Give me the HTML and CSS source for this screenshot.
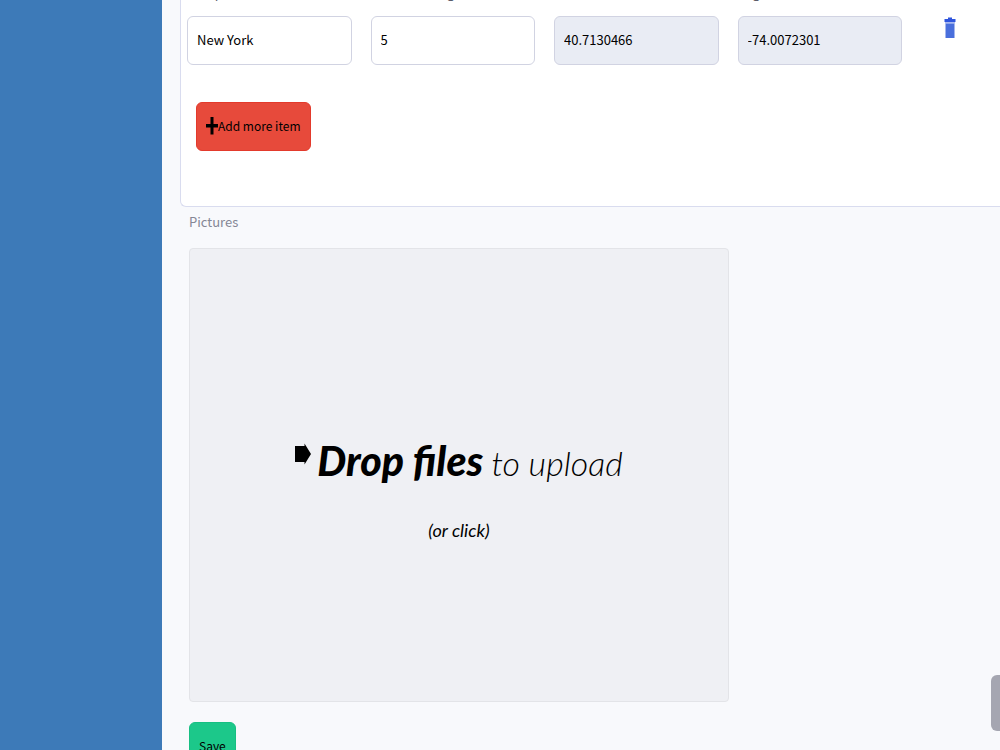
FILE: index.html
```html
<!DOCTYPE html>
<html lang="en">
<head>
    <meta charset="UTF-8">
    <meta name="viewport" content="width=device-width, initial-scale=1.0">
    <title>Edit trip</title>
    <link rel="stylesheet" href="styles.css">
</head>
<body>
    <div class="wrapper">
        <nav class="sidebar"></nav>

        <main class="content">
            <form class="trip-form">
                <div class="card">
                    <div class="item-row">
                        <div class="field">
                            <label for="camp">Camp</label>
                            <input type="text" id="camp" value="New York">
                        </div>
                        <div class="field">
                            <label for="order">Order ranking</label>
                            <input type="text" id="order" value="5">
                        </div>
                        <div class="field">
                            <label for="lat">Lat</label>
                            <input type="text" id="lat" value="40.7130466" readonly>
                        </div>
                        <div class="field">
                            <label for="lng">Lng</label>
                            <input type="text" id="lng" value="-74.0072301" readonly>
                        </div>
                        <button type="button" class="delete-btn" aria-label="Delete">
                            <svg width="12" height="22" viewBox="0 0 12 22">
                                <path fill="#2f55dd" d="M4 0.500h4V2h3.500v3H0.500V2H4z"/>
                                <path fill="#a9b8f0" d="M1 5h10v1.500H1z"/>
                                <path fill="#4a6fdc" d="M1.500 6.500h9V21h-9z"/>
                            </svg>
                        </button>
                    </div>

                    <button type="button" class="btn btn-add">
                        <svg width="12" height="20" viewBox="0 0 12 20">
                            <path d="M4.500 1h3v7H12v3.500H7.500v7h-3v-7H0V8h4.500z"/>
                        </svg>Add more item
                    </button>
                </div>

                <div class="pictures">
                    <label for="files">Pictures</label>
                    <button type="button" class="dropzone" id="files">
                        <span class="drop-title">
                            <svg width="16" height="22" viewBox="0 0 16 22">
                                <path d="M0 3h9.500V0.500L16 11 9.500 21.500V19H0z"/>
                            </svg>
                            <span><strong>Drop files</strong> to upload</span>
                        </span>
                        <span class="drop-hint">(or click)</span>
                    </button>
                    <button type="submit" class="btn btn-save">Save</button>
                </div>
            </form>
        </main>
    </div>

    <a class="scroll-top" href="#" aria-label="Back to top"></a>
</body>
</html>
```
FILE: styles.css
```css
* {
    box-sizing: border-box;
    margin: 0;
    padding: 0;
}

body {
    background: #f8f9fc;
    color: #000;
    font-family: 'Noto Sans CJK SC', sans-serif;
    font-size: 13px;
    line-height: 24px;
    height: 100vh;
    overflow: hidden;
}

button,
input {
    font: inherit;
    color: inherit;
}

.wrapper {
    display: flex;
    height: 100%;
}

.sidebar {
    flex: 0 0 162px;
    background: #3d7ab8;
}

.content {
    flex: 1;
    padding-left: 18px;
}

/* page is scrolled, the labels are just above the top edge */
.trip-form {
    margin-top: -20px;
}

.card {
    background: #fff;
    border: 1px solid #d9dcef;
    border-right: none;
    border-bottom-left-radius: 6px;
    padding: 0 0 55px 6px;
}

.item-row {
    display: grid;
    grid-template-columns: repeat(4, 1fr) 79px;
    gap: 19px;
    margin-bottom: 37px;
}

.field label {
    display: block;
    color: #5a5c69;
    margin-bottom: 11px;
}

.field input {
    display: block;
    width: 100%;
    height: 49px;
    padding: 0 9px 2px;
    background: #fff;
    border: 1px solid #d1d3e2;
    border-radius: 6px;
}

.field input[readonly] {
    background: #e9ecf4;
}

.delete-btn {
    align-self: start;
    justify-self: start;
    margin: 36px 0 0 23px;
    background: none;
    border: none;
    cursor: pointer;
}

.delete-btn svg {
    display: block;
}

.btn {
    display: flex;
    align-items: center;
    height: 49px;
    padding: 0 9px 2px;
    border-radius: 6px;
    font-size: 12px;
    cursor: pointer;
}

.btn-add {
    background: #e74a3b;
    border: 1px solid #e33a2c;
    margin-left: 9px;
}

.pictures {
    padding: 3px 0 0 9px;
}

.pictures label {
    display: block;
    color: #858796;
    margin-bottom: 14px;
}

.dropzone {
    display: flex;
    flex-direction: column;
    align-items: center;
    justify-content: center;
    gap: 19px;
    width: 100%;
    max-width: 540px;
    height: 454px;
    padding-top: 16px;
    background: #eff0f4;
    border: 1px solid #e3e4e8;
    border-radius: 4px;
    font-family: Lato, sans-serif;
    font-style: italic;
    cursor: pointer;
}

.drop-title {
    display: flex;
    align-items: center;
    gap: 6px;
    font-size: 34px;
    font-weight: 300;
    line-height: 72px;
}

.drop-title strong {
    font-size: 41px;
    font-weight: 900;
}

.drop-title svg {
    margin-bottom: 16px;
}

.drop-hint {
    font-size: 18px;
}

.btn-save {
    margin-top: 20px;
    background: #1cc88a;
    border: 1px solid #17bf82;
}

.scroll-top {
    position: fixed;
    right: -47px;
    bottom: 19px;
    width: 56px;
    height: 56px;
    background: #a5a6b1;
    border-radius: 6px;
}
```
